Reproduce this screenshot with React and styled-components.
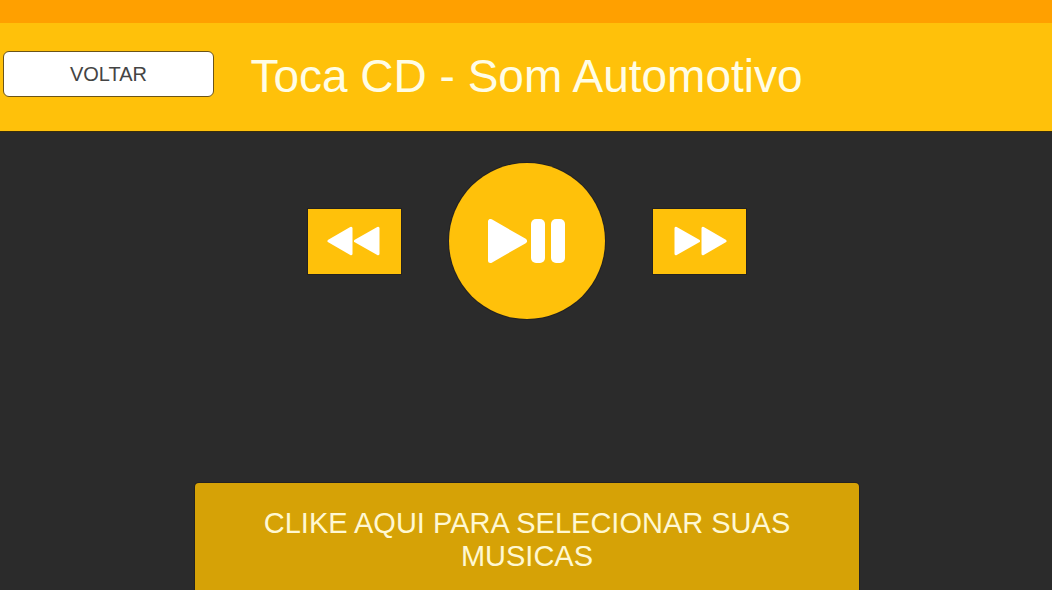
import React from "react";
import styled, { createGlobalStyle } from "styled-components";

const GlobalStyle = createGlobalStyle`
  *, *::before, *::after { box-sizing: border-box; }
  body {
    margin: 0;
    background: #2b2b2b;
    font-family: "Liberation Sans", Arial, sans-serif;
  }
  button { font-family: inherit; cursor: pointer; }
`;

const Screen = styled.div`
  display: flex;
  flex-direction: column;
  min-height: 100vh;
`;

const StatusBar = styled.div`
  height: 23px;
  background: #ffa000;
`;

const Header = styled.header`
  display: grid;
  grid-template-columns: 1fr auto 1fr;
  align-items: center;
  height: 109px;
  padding: 0 0 7px 1px;
  background: #ffc10a;
  border-bottom: 1px solid #3a2e0c;
`;

const BackButton = styled.button`
  width: 211px;
  height: 46px;
  margin-left: 2px;
  padding: 0;
  border: 1px solid #6b5418;
  border-radius: 6px;
  background: #ffffff;
  color: #444444;
  font-size: 20px;
  line-height: 24px;
`;

const Title = styled.h1`
  margin: 0;
  padding-top: 4px;
  color: #fffde6;
  font-size: 46px;
  font-weight: 400;
  line-height: 52px;
  white-space: nowrap;
`;

const Main = styled.main`
  display: flex;
  flex: 1;
  flex-direction: column;
  align-items: center;
  padding: 31px 0 0 2px;
`;

const Controls = styled.div`
  display: flex;
  align-items: center;
  gap: 48px;
`;

const ControlButton = styled.button`
  display: flex;
  align-items: center;
  justify-content: center;
  width: ${({ $round }) => ($round ? "156px" : "93px")};
  height: ${({ $round }) => ($round ? "156px" : "65px")};
  padding: 0;
  border: 0;
  border-radius: ${({ $round }) => ($round ? "50%" : "0")};
  background: #ffc10a;
  box-shadow: 0 0 0 1px #242220;
  color: #ffffff;
`;

const SelectButton = styled.button`
  width: 63.2%;
  height: 107px;
  margin-top: auto;
  padding: 6px 48px 0;
  border: 0;
  border-radius: 4px 4px 0 0;
  background: #d6a206;
  box-shadow: 0 0 0 1px #242220;
  color: #fff8d2;
  font-size: 29px;
  line-height: 33px;
`;

const Icon = styled.svg`
  display: block;
  fill: currentColor;
  stroke: currentColor;
  stroke-linejoin: round;
`;

function RewindIcon() {
  return (
    <Icon width="55" height="30" viewBox="0 0 55 30" strokeWidth="3" aria-hidden="true">
      <path d="M2 15 24 2.2V27.8Z M28.5 15 51 2.2V27.8Z" />
    </Icon>
  );
}

function ForwardIcon() {
  return (
    <Icon width="55" height="30" viewBox="-2 0 55 30" strokeWidth="3" aria-hidden="true">
      <path d="M2 2.2V27.8L24.5 15Z M29 2.2V27.8L51 15Z" />
    </Icon>
  );
}

function PlayPauseIcon() {
  return (
    <Icon width="78" height="44" viewBox="0 0 78 44" aria-hidden="true">
      <path d="M2.5 2.5V41.5L36.5 22Z" strokeWidth="5" />
      <rect x="43" y="0" width="14" height="44" rx="5" stroke="none" />
      <rect x="63" y="0" width="14" height="44" rx="5" stroke="none" />
    </Icon>
  );
}

export default function App() {
  return (
    <>
      <GlobalStyle />
      <Screen>
        <StatusBar />
        <Header>
          <BackButton type="button">VOLTAR</BackButton>
          <Title>Toca CD - Som Automotivo</Title>
        </Header>
        <Main>
          <Controls>
            <ControlButton type="button" aria-label="Anterior">
              <RewindIcon />
            </ControlButton>
            <ControlButton type="button" $round aria-label="Tocar ou pausar">
              <PlayPauseIcon />
            </ControlButton>
            <ControlButton type="button" aria-label="Próxima">
              <ForwardIcon />
            </ControlButton>
          </Controls>
          <SelectButton type="button">CLIKE AQUI PARA SELECIONAR SUAS MUSICAS</SelectButton>
        </Main>
      </Screen>
    </>
  );
}
